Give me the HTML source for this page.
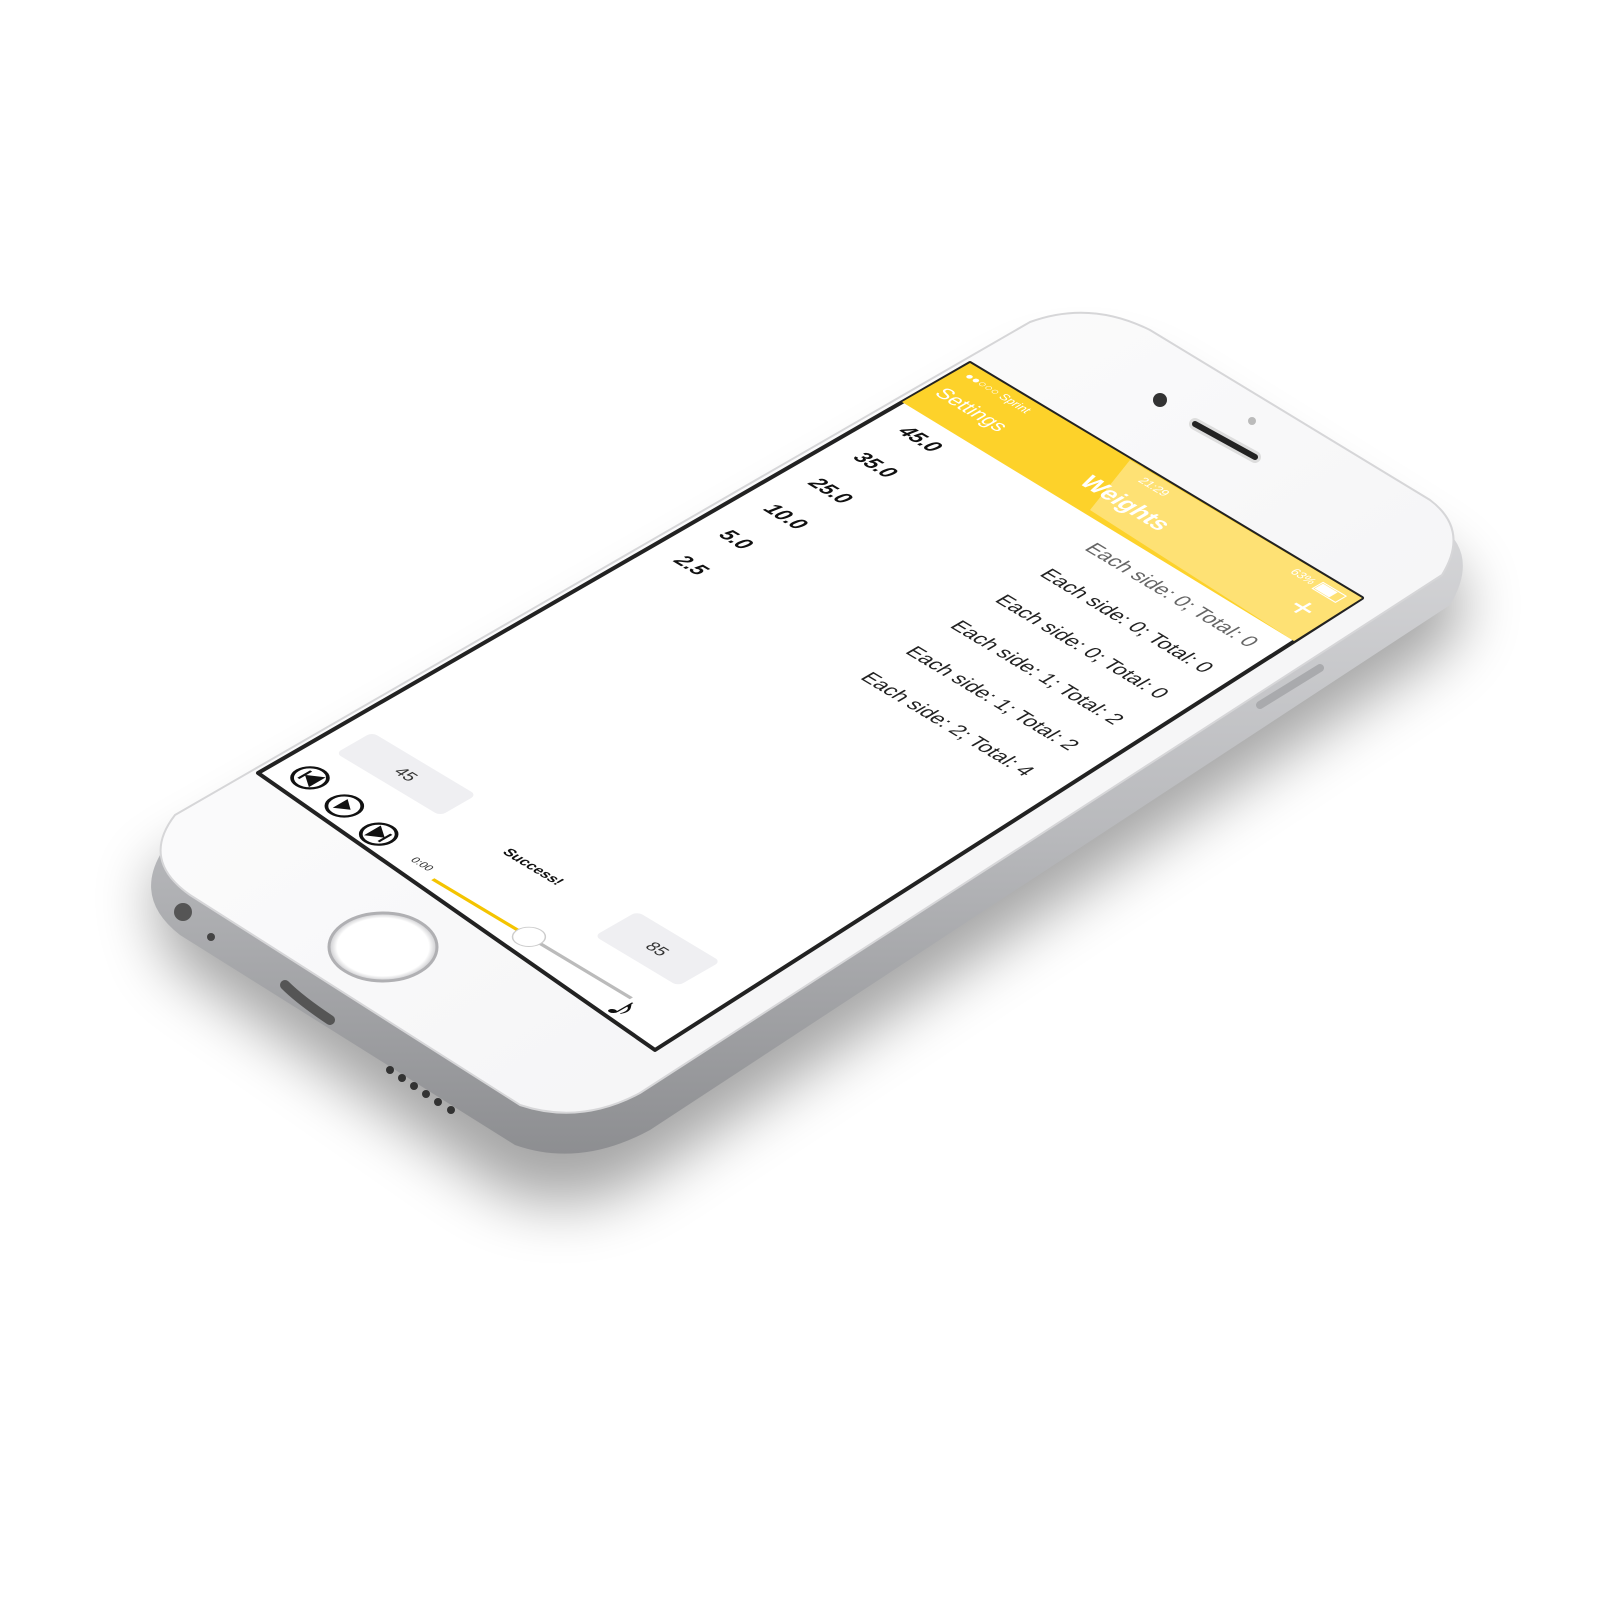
<!DOCTYPE html>
<html><head><meta charset="utf-8"><style>
html,body{margin:0;padding:0;background:#fff;}
svg{display:block}
text{font-family:"Liberation Sans",sans-serif}
</style></head><body>
<svg width="1600" height="1600" viewBox="0 0 1600 1600" xmlns="http://www.w3.org/2000/svg">
<defs>
<linearGradient id="side" x1="0" y1="0" x2="0" y2="1">
<stop offset="0" stop-color="#e8e8ea"/><stop offset="0.6" stop-color="#b9babd"/><stop offset="1" stop-color="#8d8e91"/>
</linearGradient>
<linearGradient id="face" x1="0" y1="0" x2="1" y2="1">
<stop offset="0" stop-color="#ffffff"/><stop offset="1" stop-color="#f1f1f3"/>
</linearGradient>
<filter id="blur" x="-20%" y="-20%" width="140%" height="140%"><feGaussianBlur stdDeviation="30"/></filter>
<radialGradient id="hb" cx="0.5" cy="0.5" r="0.5"><stop offset="0.85" stop-color="#fff"/><stop offset="1" stop-color="#c9c9cc"/></radialGradient>
</defs>
<path d="M 150,880 L 1030,380 Q 1090,350 1160,390 L 1450,570 Q 1480,610 1440,650 L 640,1180 Q 570,1220 500,1190 L 170,960 Z" fill="#000" opacity="0.35" filter="url(#blur)"/>
<path d="M 160,855 L 1030,345 Q 1090,320 1150,350 L 1440,525 Q 1480,555 1450,605 L 650,1130 Q 580,1168 515,1145 L 180,935 Q 135,900 160,855 Z" fill="url(#side)"/>
<path d="M 175,815 L 1030,322 Q 1090,300 1150,330 L 1430,500 Q 1470,530 1442,575 L 640,1093 Q 580,1125 520,1105 L 190,895 Q 140,860 175,815 Z" fill="url(#face)" stroke="#d6d6d8" stroke-width="2"/>
<!-- screen -->
<polygon points="970,363 1362,598 655,1050 258,773" fill="#fff" stroke="#222" stroke-width="4" stroke-linejoin="round"/>
<polygon points="970,363 1362,598 1294,641 902,402" fill="#fdd22a"/>
<polygon points="1130,460 1362,598 1294,641 1090,510" fill="#fff" opacity="0.35"/>
<g transform="matrix(1.045,0.627,-1.067,0.615,970,363)">
<text x="8" y="14" font-size="10" fill="#fff">●●○○○ Sprint</text>
<text x="187" y="14" font-size="10" fill="#fff" text-anchor="middle">21:29</text>
<text x="340" y="14" font-size="10" fill="#fff" text-anchor="end">63%</text>
<rect x="344" y="6" width="22" height="10" fill="none" stroke="#fff"/><rect x="345" y="7" width="14" height="8" fill="#fff"/>
<text x="8" y="42" font-size="17" fill="#fff">Settings</text>
<text x="187" y="44" font-size="20" font-weight="bold" fill="#fff" text-anchor="middle">Weights</text>
<text x="364" y="46" font-size="30" fill="#fff" text-anchor="end">+</text>
<g font-size="17" font-weight="bold" font-style="italic" fill="#111">
<text x="22" y="90">45.0</text><text x="22" y="132">35.0</text><text x="22" y="174">25.0</text>
<text x="22" y="216">10.0</text><text x="22" y="258">5.0</text><text x="22" y="300">2.5</text>
</g>
<g font-size="17" fill="#222" text-anchor="end">
<text x="362" y="94" fill="#666">Each side: 0; Total: 0</text>
<text x="362" y="136">Each side: 0; Total: 0</text>
<text x="362" y="178">Each side: 0; Total: 0</text>
<text x="362" y="220">Each side: 1; Total: 2</text>
<text x="362" y="262">Each side: 1; Total: 2</text>
<text x="362" y="304">Each side: 2; Total: 4</text>
</g>
<rect x="20" y="580" width="100" height="34" rx="5" fill="#efeff2"/>
<text x="70" y="602" font-size="14" fill="#333" text-anchor="middle">45</text>
<rect x="290" y="596" width="80" height="40" rx="5" fill="#efeff2"/>
<text x="330" y="621" font-size="14" fill="#333" text-anchor="middle">85</text>
<text x="205" y="614" font-size="12" font-weight="bold" fill="#111" text-anchor="middle">Success!</text>
<g fill="none" stroke="#111" stroke-width="2.5">
<circle cx="28" cy="646" r="12"/><circle cx="67" cy="652" r="12"/><circle cx="106" cy="658" r="12"/>
</g>
<path d="M23 640v12M34 640l-9 6 9 6z" fill="#111" stroke="#111" stroke-width="2"/>
<path d="M63 645l10 7-10 7z" fill="#111"/>
<path d="M101 652l9 6-9 6zM112 652v12" fill="#111" stroke="#111" stroke-width="2"/>
<text x="142" y="664" font-size="9" fill="#333">0:00</text>
<line x1="168" y1="668" x2="258" y2="668" stroke="#f4c400" stroke-width="3"/>
<line x1="258" y1="668" x2="358" y2="668" stroke="#bbb" stroke-width="3"/>
<circle cx="260" cy="668" r="11" fill="#fff" stroke="#ccc"/>
<text x="362" y="690" font-size="34" fill="#111" text-anchor="middle">♪</text>
</g>
<circle cx="1160" cy="400" r="7" fill="#333"/>
<circle cx="1252" cy="421" r="4" fill="#bbb"/>
<line x1="1195" y1="424" x2="1255" y2="457" stroke="#ddd" stroke-width="12" stroke-linecap="round"/>
<line x1="1195" y1="424" x2="1255" y2="457" stroke="#222" stroke-width="6" stroke-linecap="round"/>
<ellipse cx="383" cy="947" rx="54" ry="34" fill="url(#hb)" stroke="#b0b0b3" stroke-width="3"/>
<circle cx="183" cy="912" r="9" fill="#555"/>
<circle cx="211" cy="937" r="4" fill="#444"/>
<path d="M 285,985 Q 300,1000 330,1020" stroke="#555" stroke-width="10" stroke-linecap="round" fill="none"/>
<g fill="#333"><circle cx="390" cy="1070" r="4"/><circle cx="402" cy="1078" r="4"/><circle cx="414" cy="1086" r="4"/><circle cx="426" cy="1094" r="4"/><circle cx="438" cy="1102" r="4"/><circle cx="451" cy="1110" r="4"/></g>
<path d="M 1260,705 L 1320,668" stroke="#a9aaad" stroke-width="8" stroke-linecap="round"/>
</svg>
</body></html>
